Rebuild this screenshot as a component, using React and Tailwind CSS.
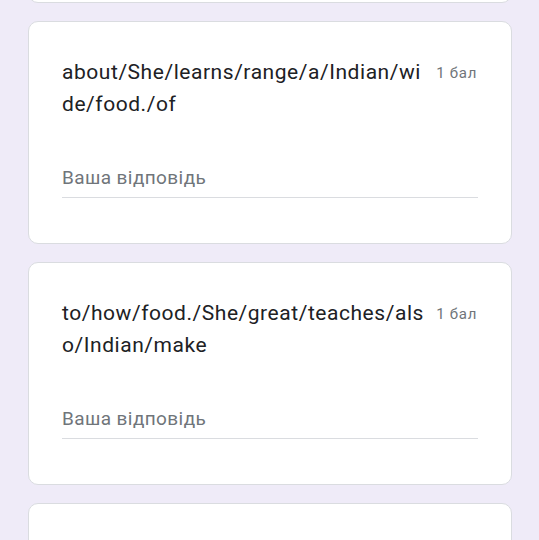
import React from "react";

function Card({ text }) {
  return (
    <div className="bg-white border border-[#dadce0] rounded-[10px] px-[33px] pt-[34px] pb-[45px]">
      <div className="flex items-start">
        <div className="flex-1 break-all text-[21px] leading-[32px] tracking-[0.55px] text-[#202124]">{text}</div>
        <div className="shrink-0 ml-[10px] mr-[1px] text-[15px] leading-[32px] tracking-[0.7px] text-[#70757a] pt-[1px]">1 бал</div>
      </div>
      <div className="mt-[46px] border-b border-[#dadce0] pb-[7px]">
        <div className="text-[19px] leading-[24px] text-[#70757a] tracking-[0.4px]">Ваша відповідь</div>
      </div>
    </div>
  );
}

export default function App() {
  return (
    <div className="bg-[#efebf8] pl-[28px] pr-[27px] overflow-hidden h-[540px]" style={{ fontFamily: "Roboto, 'Liberation Sans', sans-serif" }}>
      <div className="flex flex-col gap-[18px]">
        <div className="-mt-[100px] h-[103px] bg-white border border-[#dadce0] rounded-[10px]" />
        <Card text="about/She/learns/range/a/Indian/wide/food./of" />
        <Card text="to/how/food./She/great/teaches/also/Indian/make" />
        <div className="h-[100px] bg-white border border-[#dadce0] rounded-[10px]" />
      </div>
    </div>
  );
}
